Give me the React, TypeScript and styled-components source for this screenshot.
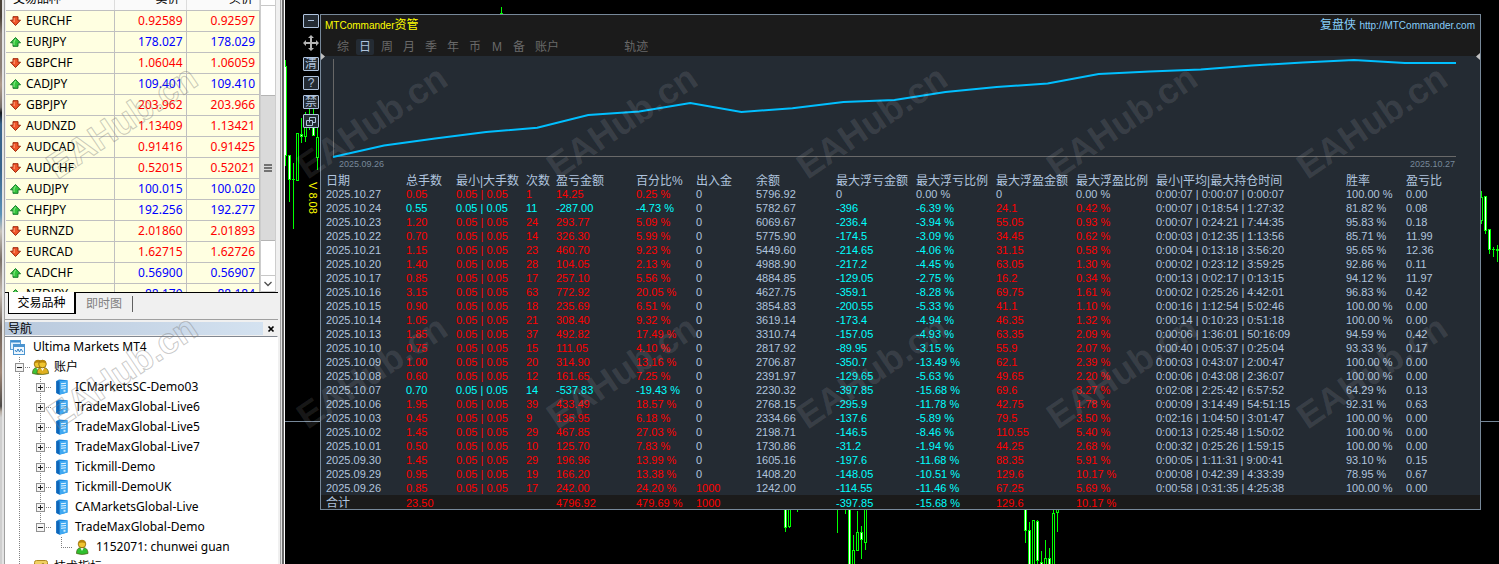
import React from 'react';
import styled, { createGlobalStyle, css } from 'styled-components';

const latinUi = '"Noto Sans", "Noto Sans CJK SC", sans-serif';
const terminal = '"Liberation Sans", "Noto Sans CJK SC", sans-serif';

const colors = {
  up: '#ff0000',
  down: '#00ffff',
  text: '#b0c4de',
  panel: '#242b33',
  bar: '#1b1b1b',
  frame: '#778899',
  candle: '#00ff00',
};

const GlobalStyle = createGlobalStyle`
  * { box-sizing: border-box; }
  body { margin: 0; background: #000; overflow: hidden; }
  button { margin: 0; padding: 0; border: 0; background: none; font: inherit; color: inherit; cursor: pointer; }
`;

const Screen = styled.div`
  display: flex;
  height: 100vh;
  overflow: hidden;
  font: 12px/20px ${latinUi};
`;

/* ---------- sidebar ---------- */

const Desktop = styled.div`
  flex: 0 0 2px;
  background: linear-gradient(#4a4238 0 3%, #8a7f76 6% 12%, #b09c8c 15%, #76706c 19%, #14181e 20%, #39648c 22% 30%, #5c92b8 38%, #c8c4bc 41%, #7a7068 46%, #c4bab0 52%, #6c6058 58%, #a08878 66%, #4c4a48 72%, #b5aaa0 73%, #cfcfcf 74%);
`;

const Sidebar = styled.aside`
  position: relative;
  flex: 0 0 283px;
  display: flex;
  flex-direction: column;
  padding: 0 7px 0 3px;
  overflow: hidden;
  background: linear-gradient(to right, #e3e3e3 0 2px, #a0a0a0 2px 3px, #f0f0f0 3px 278px, #a0a0a0 278px 279px, #e3e3e3 279px 280px, #696969 280px 282px, #fff 282px);
`;

const MarketPane = styled.section`
  display: flex;
  flex: 0 0 320px;
  flex-direction: column;
  border-bottom: 1px solid #a0a0a0;
`;

const MarketBody = styled.div`
  display: flex;
  flex: 0 0 293px;
  overflow: hidden;
  border-bottom: 1px solid #000;
  padding: 0 2px 0 1px;
  background: #f0f0f0;
`;

const Quotes = styled.table`
  flex: 1;
  align-self: flex-start;
  margin-top: -11px;
  border-collapse: collapse;
  table-layout: fixed;
  background: #ffffe1;
  color: #000;
`;

const QuoteHead = styled.th<{ $end?: boolean }>`
  height: 21px;
  padding: 0 4px 0 7px;
  background: #fafafa;
  border-right: 1px solid #dcdcdc;
  border-bottom: 1px solid #c0c0c0;
  font-weight: 400;
  text-align: ${(p) => (p.$end ? 'right' : 'left')};
  padding-right: ${(p) => (p.$end ? '6px' : '4px')};
`;

const QuoteCell = styled.td<{ $up?: boolean }>`
  height: 21px;
  padding: 0 3px 0 0;
  border-right: 1px solid #c0c0c0;
  border-bottom: 1px solid #c0c0c0;
  text-align: right;
  color: ${(p) => (p.$up ? '#0000ff' : '#ff0000')};

  &:last-child { padding-right: 4px; }
`;

const SymbolCell = styled.td`
  height: 21px;
  padding: 0;
  border-right: 1px solid #c0c0c0;
  border-bottom: 1px solid #c0c0c0;
`;

const SymbolName = styled.span`
  display: flex;
  align-items: center;
  gap: 5px;
  padding-left: 4px;
`;

const Scrollbar = styled.div`
  flex: 0 0 16px;
  display: flex;
  flex-direction: column;
  background: #fff;
  border-left: 1px solid #cdcdcd;
  border-right: 1px solid #cdcdcd;
`;

const ScrollTrack = styled.div`
  flex: 0 0 89px;
`;

const ScrollThumb = styled.div`
  flex: 0 0 146px;
  display: flex;
  align-items: center;
  justify-content: center;
  background: #dadada;
  border: solid #b4b4b4;
  border-width: 1px 0;
`;

const ScrollButton = styled.button`
  flex: 0 0 17px;
  margin-top: auto;
  display: flex;
  align-items: center;
  justify-content: center;
  border-top: 1px solid #c8c8c8;
  border-bottom: 1px solid #c8c8c8;
`;

const ScrollTop = styled.div`
  flex: 0 0 6px;
  border-bottom: 1px solid #c8c8c8;
`;

const SheetTabs = styled.div`
  display: flex;
  padding-left: 3px;
`;

const SheetTab = styled.button<{ $active?: boolean }>`
  height: 21px;
  line-height: 20px;
  ${(p) =>
    p.$active
      ? css`
          width: 68px;
          margin-top: -1px;
          height: 22px;
          background: #fff;
          border: 1px solid #000;
          border-top: 0;
          border-right-width: 2px;
        `
      : css`
          padding: 0 10px;
          color: #808080;
        `}
`;

const TabDivider = styled.i`
  width: 1px;
  height: 16px;
  margin-top: 3px;
  background: #606060;
`;

const Navigator = styled.section`
  flex: 1;
  display: flex;
  flex-direction: column;
  min-height: 0;
  padding-top: 2px;
`;

const NavTitle = styled.header`
  flex: 0 0 13px;
  display: flex;
  align-items: center;
  justify-content: space-between;
  padding: 0 3px;
  line-height: 13px;
  color: #000;
  background: linear-gradient(to right, #b8c8dc, #d4e2f0 258px, #f0f0f0 258px);
`;

const CloseButton = styled.button`
  width: 8px;
  height: 8px;
  display: flex;
`;

const Tree = styled.div`
  flex: 1;
  margin-top: 1px;
  padding: 0 0 0 4px;
  background: #fff;
  border: 1px solid #828790;
  border-bottom: 0;
  border-right-color: #fff;
  border-left: 0;
  color: #000;
  overflow: hidden;
  white-space: nowrap;
`;

const TreeItem = styled.div`
  display: flex;
  align-items: center;
  height: 20px;
`;

const dots = (dir: string) => `repeating-linear-gradient(to ${dir}, #808080 0 1px, transparent 1px 2px)`;

const Guide = styled.span<{ $line?: 'full' | 'top'; $stub?: boolean }>`
  flex: 0 0 21px;
  height: 20px;
  display: flex;
  align-items: center;
  justify-content: center;
  background-repeat: no-repeat;
  background-image: ${(p) => (p.$line ? dots('bottom') : 'none')}, ${(p) => (p.$stub ? dots('right') : 'none')};
  background-position: 10px 0, 10px 10px;
  background-size: 1px ${(p) => (p.$line === 'top' ? '10px' : '100%')}, 11px 1px;
`;

const Expander = styled.button`
  width: 9px;
  height: 9px;
  display: flex;
`;

const TreeIcon = styled.span<{ $root?: boolean }>`
  flex: 0 0 24px;
  display: flex;
  padding-left: 1px;
  justify-content: ${(p) => (p.$root ? 'flex-start' : 'center')};
  padding-right: 4px;
`;

/* ---------- chart ---------- */

const Chart = styled.main`
  position: relative;
  flex: 1;
  display: flex;
  align-items: flex-start;
  min-width: 0;
  padding: 14px 18px 0 18px;
  overflow: hidden;
  background: #000;
  font: 11px/14px ${terminal};
  color: ${colors.text};
`;

const Candles = styled.svg`
  position: absolute;
  inset: 0;
  width: 100%;
  height: 100%;
`;

const Tools = styled.div`
  position: relative;
  flex: 0 0 17px;
  display: flex;
  flex-direction: column;
  align-items: flex-start;
  gap: 5px;
`;

const ToolButton = styled.button`
  width: 16px;
  height: 14px;
  display: flex;
  align-items: center;
  justify-content: center;
  border: 1px solid ${colors.text};
  border-radius: 1px;
  background: ${colors.panel};
  font-size: 12px;
  line-height: 12px;
`;

const MoveButton = styled.button`
  width: 16px;
  height: 16px;
  margin: 2px 0 1px;
  display: flex;
`;

const Version = styled.span`
  align-self: flex-end;
  margin-top: 49px;
  writing-mode: vertical-rl;
  line-height: 14px;
  color: #ffff00;
`;

const Panel = styled.section`
  position: relative;
  flex: 1;
  min-width: 0;
  border: 1px solid ${colors.frame};
  background: ${colors.panel};
`;

const PanelHead = styled.header`
  display: flex;
  flex-direction: column;
  height: 41px;
  background: ${colors.bar};
`;

const TitleBar = styled.div`
  display: flex;
  justify-content: space-between;
  padding: 0 5px 0 4px;
  font-size: 10px;
  line-height: 21px;
  color: #ffff00;
`;

const Cjk = styled.span`
  font-size: 12px;
`;

const SiteLink = styled.a`
  color: #87cefa;
  text-decoration: none;
`;

const Menu = styled.nav`
  display: flex;
  gap: 4px;
  padding: 3px 0 0 13px;
`;

const MenuButton = styled.button<{ $active?: boolean; $apart?: boolean }>`
  min-width: 18px;
  height: 16px;
  padding: 0 ${(p) => (p.$active ? 0 : 3)}px;
  margin-left: ${(p) => (p.$apart ? 55 : 0)}px;
  border-radius: 2px;
  font-size: 12px;
  line-height: 16px;
  color: ${(p) => (p.$active ? colors.text : '#696969')};
  background: ${(p) => (p.$active ? colors.panel : 'transparent')};
`;

const Handle = styled.svg<{ $right?: boolean }>`
  position: absolute;
  top: 38px;
  ${(p) => (p.$right ? 'right: 0;' : 'left: 0;')}
  width: 4px;
  height: 7px;
`;

const Plot = styled.figure`
  margin: 0;
  padding: 3px 24px 0 12px;
`;

const Curve = styled.svg`
  display: block;
  width: 100%;
  height: 99px;
  overflow: visible;
`;

const PlotDates = styled.figcaption`
  display: flex;
  justify-content: space-between;
  padding: 0 1px 0 6px;
  height: 15px;
  font-size: 9px;
  line-height: 13px;
  color: ${colors.frame};
`;

const Report = styled.table`
  width: 100%;
  table-layout: fixed;
  border-collapse: collapse;
  white-space: nowrap;
`;

const HeadCell = styled.th`
  height: 14px;
  padding: 2px 0 0 5px;
  font-size: 12px;
  line-height: 12px;
  font-weight: 400;
  text-align: left;
`;

const Cell = styled.td<{ $tone: string }>`
  height: 14px;
  padding: 0 0 0 5px;
  line-height: 14px;
  color: ${(p) => p.$tone};
`;

const TotalRow = styled.tr`
  background: ${colors.bar};

  ${Cell} {
    padding-top: 2px;
    line-height: 12px;
  }
`;

/* ---------- watermark ---------- */

const MarkLayer = styled.div<{ $outline?: boolean }>`
  position: absolute;
  top: -3px;
  left: ${(p) => (p.$outline ? '-5px' : '-38px')};
  display: grid;
  grid-template-columns: repeat(${(p) => (p.$outline ? 1 : 5)}, 250px);
  grid-auto-rows: 250px;
  place-items: center;
  pointer-events: none;
`;

const Mark = styled.span<{ $outline?: boolean }>`
  font: 700 36px/40px "Liberation Sans", sans-serif;
  transform: rotate(-34deg);
  color: rgba(255, 255, 255, 0.1);
  ${(p) =>
    p.$outline &&
    css`
      color: transparent;
      -webkit-text-stroke: 1px rgba(120, 120, 120, 0.4);
    `}
`;

/* ---------- data ---------- */

type Quote = [name: string, up: boolean, bid: string, ask: string];

const quotes: Quote[] = [
  ['EURCHF', false, '0.92589', '0.92597'],
  ['EURJPY', true, '178.027', '178.029'],
  ['GBPCHF', false, '1.06044', '1.06059'],
  ['CADJPY', true, '109.401', '109.410'],
  ['GBPJPY', false, '203.962', '203.966'],
  ['AUDNZD', false, '1.13409', '1.13421'],
  ['AUDCAD', false, '0.91416', '0.91425'],
  ['AUDCHF', false, '0.52015', '0.52021'],
  ['AUDJPY', true, '100.015', '100.020'],
  ['CHFJPY', true, '192.256', '192.277'],
  ['EURNZD', false, '2.01860', '2.01893'],
  ['EURCAD', false, '1.62715', '1.62726'],
  ['CADCHF', true, '0.56900', '0.56907'],
  ['NZDJPY', true, '88.179', '88.184'],
];

const servers = [
  'ICMarketsSC-Demo03',
  'TradeMaxGlobal-Live6',
  'TradeMaxGlobal-Live5',
  'TradeMaxGlobal-Live7',
  'Tickmill-Demo',
  'Tickmill-DemoUK',
  'CAMarketsGlobal-Live',
  'TradeMaxGlobal-Demo',
];

const columns: [string, number?][] = [
  ['日期', 80],
  ['总手数', 50],
  ['最小|大手数', 70],
  ['次数', 30],
  ['盈亏金额', 80],
  ['百分比%', 60],
  ['出入金', 60],
  ['余额', 80],
  ['最大浮亏金额', 80],
  ['最大浮亏比例', 80],
  ['最大浮盈金额', 80],
  ['最大浮盈比例', 80],
  ['最小|平均|最大持仓时间', 190],
  ['胜率', 60],
  ['盈亏比'],
];

/* date; lots; trades; profit; percent; deposit; balance; max loss; loss %; max gain; gain %; hold times; win rate; ratio */
const days = `
2025.10.27;0.05;1;14.25;0.25;0;5796.92;0;0.00;0;0.00;0:00:07 | 0:00:07 | 0:00:07;100.00;0.00
2025.10.24;0.55;11;-287.00;-4.73;0;5782.67;-396;-6.39;24.1;0.42;0:00:07 | 0:18:54 | 1:27:32;81.82;0.08
2025.10.23;1.20;24;293.77;5.09;0;6069.67;-236.4;-3.94;55.05;0.93;0:00:07 | 0:24:21 | 7:44:35;95.83;0.18
2025.10.22;0.70;14;326.30;5.99;0;5775.90;-174.5;-3.09;34.45;0.62;0:00:03 | 0:12:35 | 1:13:56;85.71;11.99
2025.10.21;1.15;23;460.70;9.23;0;5449.60;-214.65;-4.06;31.15;0.58;0:00:04 | 0:13:18 | 3:56:20;95.65;12.36
2025.10.20;1.40;28;104.05;2.13;0;4988.90;-217.2;-4.45;63.05;1.30;0:00:02 | 0:23:12 | 3:59:25;92.86;0.11
2025.10.17;0.85;17;257.10;5.56;0;4884.85;-129.05;-2.75;16.2;0.34;0:00:13 | 0:02:17 | 0:13:15;94.12;11.97
2025.10.16;3.15;63;772.92;20.05;0;4627.75;-359.1;-8.28;69.75;1.61;0:00:02 | 0:25:26 | 4:42:01;96.83;0.42
2025.10.15;0.90;18;235.69;6.51;0;3854.83;-200.55;-5.33;41.1;1.10;0:00:16 | 1:12:54 | 5:02:46;100.00;0.00
2025.10.14;1.05;21;308.40;9.32;0;3619.14;-173.4;-4.94;46.35;1.32;0:00:14 | 0:10:23 | 0:51:18;100.00;0.00
2025.10.13;1.85;37;492.82;17.49;0;3310.74;-157.05;-4.93;63.35;2.09;0:00:06 | 1:36:01 | 50:16:09;94.59;0.42
2025.10.10;0.75;15;111.05;4.10;0;2817.92;-89.95;-3.15;55.9;2.07;0:00:40 | 0:05:37 | 0:25:04;93.33;0.17
2025.10.09;1.00;20;314.90;13.16;0;2706.87;-350.7;-13.49;62.1;2.39;0:00:03 | 0:43:07 | 2:00:47;100.00;0.00
2025.10.08;0.60;12;161.65;7.25;0;2391.97;-129.65;-5.63;49.65;2.20;0:00:06 | 0:43:08 | 2:36:07;100.00;0.00
2025.10.07;0.70;14;-537.83;-19.43;0;2230.32;-397.85;-15.68;69.6;3.27;0:02:08 | 2:25:42 | 6:57:52;64.29;0.13
2025.10.06;1.95;39;433.49;18.57;0;2768.15;-295.9;-11.78;42.75;1.78;0:00:09 | 3:14:49 | 54:51:15;92.31;0.63
2025.10.03;0.45;9;135.95;6.18;0;2334.66;-137.6;-5.89;79.5;3.50;0:02:16 | 1:04:50 | 3:01:47;100.00;0.00
2025.10.02;1.45;29;467.85;27.03;0;2198.71;-146.5;-8.46;110.55;5.40;0:00:13 | 0:25:48 | 1:50:02;100.00;0.00
2025.10.01;0.50;10;125.70;7.83;0;1730.86;-31.2;-1.94;44.25;2.68;0:00:32 | 0:25:26 | 1:59:15;100.00;0.00
2025.09.30;1.45;29;196.96;13.99;0;1605.16;-197.6;-11.68;88.35;5.91;0:00:05 | 1:11:31 | 9:00:41;93.10;0.15
2025.09.29;0.95;19;166.20;13.38;0;1408.20;-148.05;-10.51;129.6;10.17;0:00:08 | 0:42:39 | 4:33:39;78.95;0.67
2025.09.26;0.85;17;242.00;24.20;1000;1242.00;-114.55;-11.46;67.25;5.69;0:00:58 | 0:31:35 | 4:25:38;100.00;0.00
`
  .trim()
  .split('\n')
  .map((line) => line.split(';'));

const tone = (value: string) => {
  const n = parseFloat(value);
  return n > 0 ? colors.up : n < 0 ? colors.down : colors.text;
};

const dayCells = (d: string[]): [string, string][] => {
  const main = tone(d[3]);
  return [
    [d[0], colors.text],
    [d[1], main],
    ['0.05 | 0.05', main],
    [d[2], main],
    [d[3], main],
    [`${d[4]} %`, main],
    [d[5], tone(d[5])],
    [d[6], colors.text],
    [d[7], tone(d[7])],
    [`${d[8]} %`, tone(d[8])],
    [d[9], tone(d[9])],
    [`${d[10]} %`, tone(d[10])],
    [d[11], colors.text],
    [`${d[12]} %`, colors.text],
    [d[13], colors.text],
  ];
};

const totals = ['合计', '23.50', '', '', '4796.92', '479.69 %', '1000', '', '-397.85', '-15.68 %', '129.6', '10.17 %', '', '', ''];

const equity = [98, 86.5, 79.5, 73, 68.7, 56, 52.5, 44, 53, 49.3, 43, 41, 33, 28, 24.5, 15, 12.5, 10.5, 6.5, 3.5, 1, 4, 4];

/* x, wick top, wick bottom, body top, body bottom, filled */
const candles: [number, number, number, number, number, boolean][] = [
  [0, 60, 166, 66, 156, true],
  [4, 155, 202, 155, 180, true],
  [8, 163, 229, 179, 180, false],
  [12, 133, 181, 133, 181, false],
  [16, 118, 143, 134, 137, true],
  [20, 112, 142, 127, 137, false],
  [24, 108, 130, 118, 126, false],
  [28, 108, 136, 120, 136, true],
  [32, 120, 170, 137, 158, false],
  [216, 7, 14, 13, 14, false],
  [1196, 191, 224, 197, 221, false],
  [1200, 196, 234, 196, 231, true],
  [1204, 229, 254, 229, 250, true],
  [1208, 247, 257, 249, 250, false],
  [1212, 245, 262, 249, 251, false],
  [500, 500, 532, 500, 528, true],
  [504, 500, 528, 500, 527, false],
  [512, 500, 512, 500, 505, false],
  [552, 500, 533, 500, 505, false],
  [560, 500, 514, 500, 505, false],
  [564, 500, 600, 500, 600, true],
  [568, 535, 600, 550, 600, false],
  [572, 511, 551, 532, 551, false],
  [576, 526, 559, 532, 540, true],
  [580, 500, 550, 500, 543, false],
  [740, 500, 543, 500, 531, true],
  [744, 522, 600, 530, 600, true],
  [748, 520, 600, 520, 600, false],
  [752, 520, 564, 521, 561, true],
  [756, 551, 600, 562, 600, true],
  [760, 540, 600, 558, 600, false],
  [764, 548, 600, 558, 600, true],
  [768, 510, 600, 513, 600, false],
  [772, 500, 532, 500, 513, false],
];

/* ---------- drawings ---------- */

const QuoteArrow = ({ up }: { up: boolean }) => (
  <svg width="11" height="10" viewBox="0 0 11 10">
    <path
      d={up ? 'M5.5 .5 10.5 5.8H8V9.3H3V5.8H.5Z' : 'M5.5 9.5 10.5 4.2H8V.7H3V4.2H.5Z'}
      fill={up ? '#35c43c' : '#f0562a'}
      stroke={up ? '#157a2a' : '#9c2408'}
    />
    <path d={up ? 'M5.5 2 4 5V8' : 'M4.2 2V6'} fill="none" stroke={up ? '#8df08a' : '#ffa27c'} />
  </svg>
);

const ToggleBox = ({ open }: { open?: boolean }) => (
  <svg width="9" height="9">
    <rect x=".5" y=".5" width="8" height="8" fill="#f4f4f4" stroke="#919191" />
    <path d={open ? 'M2 4.5h5' : 'M2 4.5h5M4.5 2v5'} stroke="#222" />
  </svg>
);

const ServerIcon = () => (
  <svg width="12" height="16" viewBox="0 0 12 16">
    <path d="M.3 2 3 .4l8.500 .8v12.300L3.500 15.700.3 14Z" fill="#1c86dc" />
    <path d="M3.500 2.200 11.500 1.400v12L3.500 15.500Z" fill="#3fa9f2" />
    <path d="M.3 2 3.500 2.600v13L.3 14Z" fill="#0f66b8" />
    <path d="M5 4.800 10 4.300M5 7 10 6.500M5 9.200 10 8.700" stroke="#e8f6ff" strokeWidth="1.100" />
    <rect x="7.500" y="10.800" width="2" height="2" fill="#c9ecff" />
  </svg>
);

const PersonShape = ({ x, shirt }: { x: number; shirt: string }) => (
  <g transform={`translate(${x} 0)`}>
    <path d="M.5 14.500C.5 10 2.500 8.500 6 8.500s6 1.500 6 6Q6 16.500.5 14.500Z" fill={shirt} stroke="#4a5a10" strokeWidth=".7" />
    <path d="M4.500 9 6 12l1.600-3Z" fill="#fff" />
    <circle cx="6" cy="5" r="3.800" fill="#f0c530" stroke="#8a6208" strokeWidth=".8" />
    <path d="M2.500 4.500Q3 .8 6 .9T9.600 4.500Q6 2.500 2.500 4.500Z" fill="#b8860b" />
  </g>
);

const AccountsIcon = () => (
  <svg width="17" height="16" viewBox="0 0 17 16">
    <PersonShape x={0} shirt="#3ec43a" />
    <PersonShape x={4.5} shirt="#e0b020" />
  </svg>
);

const AccountIcon = () => (
  <svg width="13" height="16" viewBox="0 0 13 16">
    <PersonShape x={0} shirt="#2fc02f" />
  </svg>
);

const TerminalIcon = () => (
  <svg width="15" height="15" viewBox="0 0 15 15">
    <rect x=".5" y=".5" width="10" height="9" fill="#dff0fd" stroke="#5b9fd6" />
    <path d="M1 1.500h9" stroke="#3d8ed0" strokeWidth="2" />
    <rect x="3.500" y="4.500" width="11" height="10" fill="#eef7fe" stroke="#4b94d0" />
    <path d="M4 6h10" stroke="#4b94d0" strokeWidth="2" />
    <path d="m5 10 1.500 2L8 9l1.500 3L11 9l2 3" fill="none" stroke="#2f7fc4" />
  </svg>
);

const IndicatorIcon = () => (
  <svg width="14" height="14" viewBox="0 0 14 14">
    <rect x=".5" y=".5" width="13" height="13" rx="2" fill="#f0d060" stroke="#b08820" />
    <path d="M4 11q2 0 2.500-4T10 4M5 7h4" fill="none" stroke="#7a5a08" />
  </svg>
);

const Candle = ({ c: [x, top, bottom, open, close, filled] }: { c: (typeof candles)[number] }) => (
  <g>
    <rect x={x} y={top} width="1" height={bottom - top} fill={colors.candle} />
    <rect x={x - 1} y={open} width="3" height={close - open} fill={colors.candle} />
    {close - open > 2 && (
      <rect x={x} y={open + 1} width="1" height={close - open - 2} fill={filled ? '#fff' : '#000'} />
    )}
  </g>
);

/* ---------- parts ---------- */

const MarketWatch = () => (
  <MarketPane>
    <MarketBody>
      <Quotes>
        <colgroup>
          <col style={{ width: 108 }} />
          <col style={{ width: 72 }} />
          <col />
        </colgroup>
        <thead>
          <tr>
            <QuoteHead>交易品种</QuoteHead>
            <QuoteHead $end>卖价</QuoteHead>
            <QuoteHead $end>买价</QuoteHead>
          </tr>
        </thead>
        <tbody>
          {quotes.map(([name, up, bid, ask]) => (
            <tr key={name}>
              <SymbolCell>
                <SymbolName>
                  <QuoteArrow up={up} />
                  {name}
                </SymbolName>
              </SymbolCell>
              <QuoteCell $up={up}>{bid}</QuoteCell>
              <QuoteCell $up={up}>{ask}</QuoteCell>
            </tr>
          ))}
        </tbody>
      </Quotes>
      <Scrollbar>
        <ScrollTop />
        <ScrollTrack />
        <ScrollThumb>
          <svg width="8" height="8">
            <path d="M0 1h8M0 4h8M0 7h8" stroke="#505050" strokeWidth="1.500" />
          </svg>
        </ScrollThumb>
        <ScrollButton aria-label="向下滚动">
          <svg width="8" height="6">
            <path d="m.5 1 3.500 3.500L7.500 1" fill="none" stroke="#505050" strokeWidth="1.300" />
          </svg>
        </ScrollButton>
      </Scrollbar>
    </MarketBody>
    <SheetTabs>
      <SheetTab $active>交易品种</SheetTab>
      <SheetTab>即时图</SheetTab>
      <TabDivider />
    </SheetTabs>
  </MarketPane>
);

const NavigatorPane = () => (
  <Navigator>
    <NavTitle>
      导航
      <CloseButton aria-label="关闭">
        <svg width="8" height="8">
          <path d="m1.500 1.500 5 5m0-5-5 5" stroke="#000" strokeWidth="1.700" />
        </svg>
      </CloseButton>
    </NavTitle>
    <Tree>
      <TreeItem>
        <TreeIcon $root>
          <TerminalIcon />
        </TreeIcon>
        Ultima Markets MT4
      </TreeItem>
      <TreeItem>
        <Guide $line="full" $stub>
          <Expander aria-label="账户">
            <ToggleBox open />
          </Expander>
        </Guide>
        <TreeIcon>
          <AccountsIcon />
        </TreeIcon>
        账户
      </TreeItem>
      {servers.map((name, i) => (
        <TreeItem key={name}>
          <Guide $line="full" />
          <Guide $line={i === servers.length - 1 ? 'top' : 'full'} $stub>
            <Expander aria-label={name}>
              <ToggleBox open={i === servers.length - 1} />
            </Expander>
          </Guide>
          <TreeIcon>
            <ServerIcon />
          </TreeIcon>
          {name}
        </TreeItem>
      ))}
      <TreeItem>
        <Guide $line="full" />
        <Guide />
        <Guide $line="top" $stub />
        <TreeIcon>
          <AccountIcon />
        </TreeIcon>
        1152071: chunwei guan
      </TreeItem>
      <TreeItem>
        <Guide $line="full" $stub />
        <TreeIcon>
          <IndicatorIcon />
        </TreeIcon>
        技术指标
      </TreeItem>
    </Tree>
  </Navigator>
);

const ToolStrip = () => (
  <Tools>
    <ToolButton aria-label="最小化">
      <svg width="8" height="2">
        <path d="M1 .5h6" stroke={colors.text} />
      </svg>
    </ToolButton>
    <MoveButton aria-label="移动">
      <svg width="16" height="16">
        <path d="M8 2v12M2 8h12" stroke="#b4b4b4" strokeWidth="2" />
        <path d="m8 0 3 3H5ZM8 16l3-3H5ZM0 8l3-3v6ZM16 8l-3-3v6Z" fill="#b4b4b4" />
      </svg>
    </MoveButton>
    <ToolButton>清</ToolButton>
    <ToolButton>?</ToolButton>
    <ToolButton>禁</ToolButton>
    <ToolButton aria-label="还原">
      <svg width="10" height="9">
        <path d="M3.500 5.500v-5h6v5h-3M.5 3.500h6v5h-6Z" fill="none" stroke={colors.text} />
      </svg>
    </ToolButton>
    <Version>V 8.08</Version>
  </Tools>
);

const menu = ['综', '日', '周', '月', '季', '年', '币', 'M', '备', '账户', '轨迹'];

const ReportPanel = () => (
  <Panel>
    <PanelHead>
      <TitleBar>
        <span>
          MTCommander<Cjk>资管</Cjk>
        </span>
        <SiteLink href="http://MTCommander.com">
          <Cjk>复盘侠 </Cjk>http://MTCommander.com
        </SiteLink>
      </TitleBar>
      <Menu>
        {menu.map((label) => (
          <MenuButton key={label} $active={label === '日'} $apart={label === '轨迹'}>
            {label}
          </MenuButton>
        ))}
      </Menu>
    </PanelHead>
    <Handle>
      <path d="M0 0 4 3.500 0 7Z" fill="#c0c0c0" />
    </Handle>
    <Handle $right>
      <path d="M4 0 0 3.500 4 7Z" fill="#c0c0c0" />
    </Handle>
    <Plot>
      <Curve viewBox="0 0 1124 99" preserveAspectRatio="none">
        <path d="M.5 0V97.500H1124" fill="none" stroke="#696969" vectorEffect="non-scaling-stroke" />
        <polyline
          points={equity.map((y, i) => `${(i * 1124) / (equity.length - 1)},${y}`).join(' ')}
          fill="none"
          stroke="#00bfff"
          strokeWidth="2"
          vectorEffect="non-scaling-stroke"
        />
      </Curve>
      <PlotDates>
        <span>2025.09.26</span>
        <span>2025.10.27</span>
      </PlotDates>
    </Plot>
    <Report>
      <colgroup>
        {columns.map(([title, width]) => (
          <col key={title} style={{ width }} />
        ))}
      </colgroup>
      <thead>
        <tr>
          {columns.map(([title]) => (
            <HeadCell key={title}>{title}</HeadCell>
          ))}
        </tr>
      </thead>
      <tbody>
        {days.map((day) => (
          <tr key={day[0]}>
            {dayCells(day).map(([value, color], i) => (
              <Cell key={i} $tone={color}>
                {value}
              </Cell>
            ))}
          </tr>
        ))}
      </tbody>
      <tfoot>
        <TotalRow>
          {totals.map((value, i) => (
            <Cell key={i} $tone={tone(value)}>
              {i === 0 ? <Cjk>{value}</Cjk> : value}
            </Cell>
          ))}
        </TotalRow>
      </tfoot>
    </Report>
  </Panel>
);

export default function App() {
  return (
    <Screen>
      <GlobalStyle />
      <Desktop />
      <Sidebar>
        <MarketWatch />
        <NavigatorPane />
        <MarkLayer $outline aria-hidden>
          <Mark $outline>EAHub.cn</Mark>
          <Mark $outline>EAHub.cn</Mark>
        </MarkLayer>
      </Sidebar>
      <Chart>
        <Candles>
          <rect x="0" y="421" width="100%" height="1" fill={colors.frame} />
          {candles.map((c, i) => (
            <Candle key={i} c={c} />
          ))}
        </Candles>
        <ToolStrip />
        <ReportPanel />
        <MarkLayer aria-hidden>
          {Array.from({ length: 10 }, (_, i) => (
            <Mark key={i}>EAHub.cn</Mark>
          ))}
        </MarkLayer>
      </Chart>
    </Screen>
  );
}
